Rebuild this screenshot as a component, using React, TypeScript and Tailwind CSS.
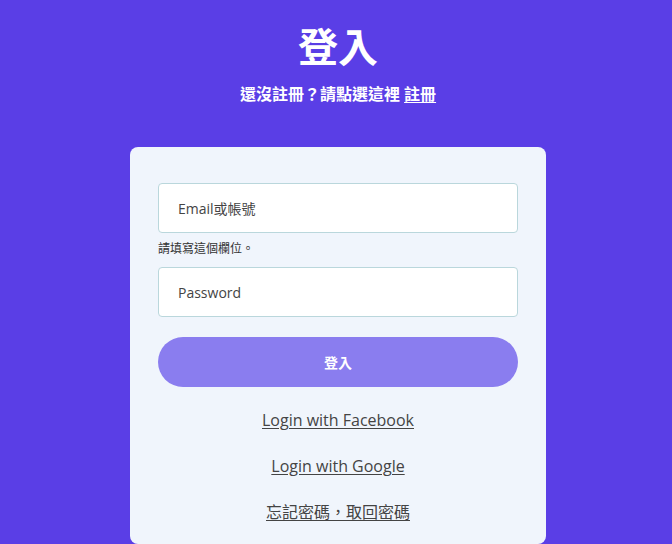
import React from 'react';

export default function App() {
  const font = { fontFamily: '"Open Sans", "Noto Sans CJK TC", sans-serif' };

  return (
    <div className="min-h-[544px] w-full bg-[#5a3ee6] pl-[4px] pt-[23px]" style={font}>
      {/* Encabezado */}
      <h1 className="text-center text-[40px] font-bold leading-[48px] text-white">登入</h1>
      <p className="mt-[11px] text-center text-[16px] font-semibold leading-6 text-white">
        還沒註冊？請點選這裡 <a href="#" className="underline underline-offset-2">註冊</a>
      </p>

      {/* Tarjeta de login */}
      <div className="mx-auto mt-[41px] w-[416px] rounded-lg bg-[#f0f5fc] px-[28px] pt-[36px] pb-[20px]">
        <input
          type="text"
          placeholder="Email或帳號"
          className="block h-[50px] w-full rounded-[4px] border border-[#bad7dc] bg-white px-[19px] text-[14px] text-[#444] placeholder:text-[#444] outline-none"
        />
        <p className="mt-[7px] text-[12px] leading-[18px] text-[#333]">請填寫這個欄位。</p>
        <input
          type="password"
          placeholder="Password"
          className="mt-[9px] block h-[50px] w-full rounded-[4px] border border-[#bad7dc] bg-white px-[19px] text-[14px] text-[#444] placeholder:text-[#444] outline-none"
        />
        <button className="mt-[20px] flex h-[50px] w-full items-center justify-center rounded-full bg-[#8a7def] text-[14px] font-bold text-white">
          登入
        </button>

        <div className="mt-[21px] flex flex-col items-center gap-[22px] text-[16px] leading-6 text-[#444]">
          <a href="#" className="underline underline-offset-2">Login with Facebook</a>
          <a href="#" className="underline underline-offset-2">Login with Google</a>
          <a href="#" className="underline underline-offset-2">忘記密碼，取回密碼</a>
        </div>
      </div>
    </div>
  );
}
